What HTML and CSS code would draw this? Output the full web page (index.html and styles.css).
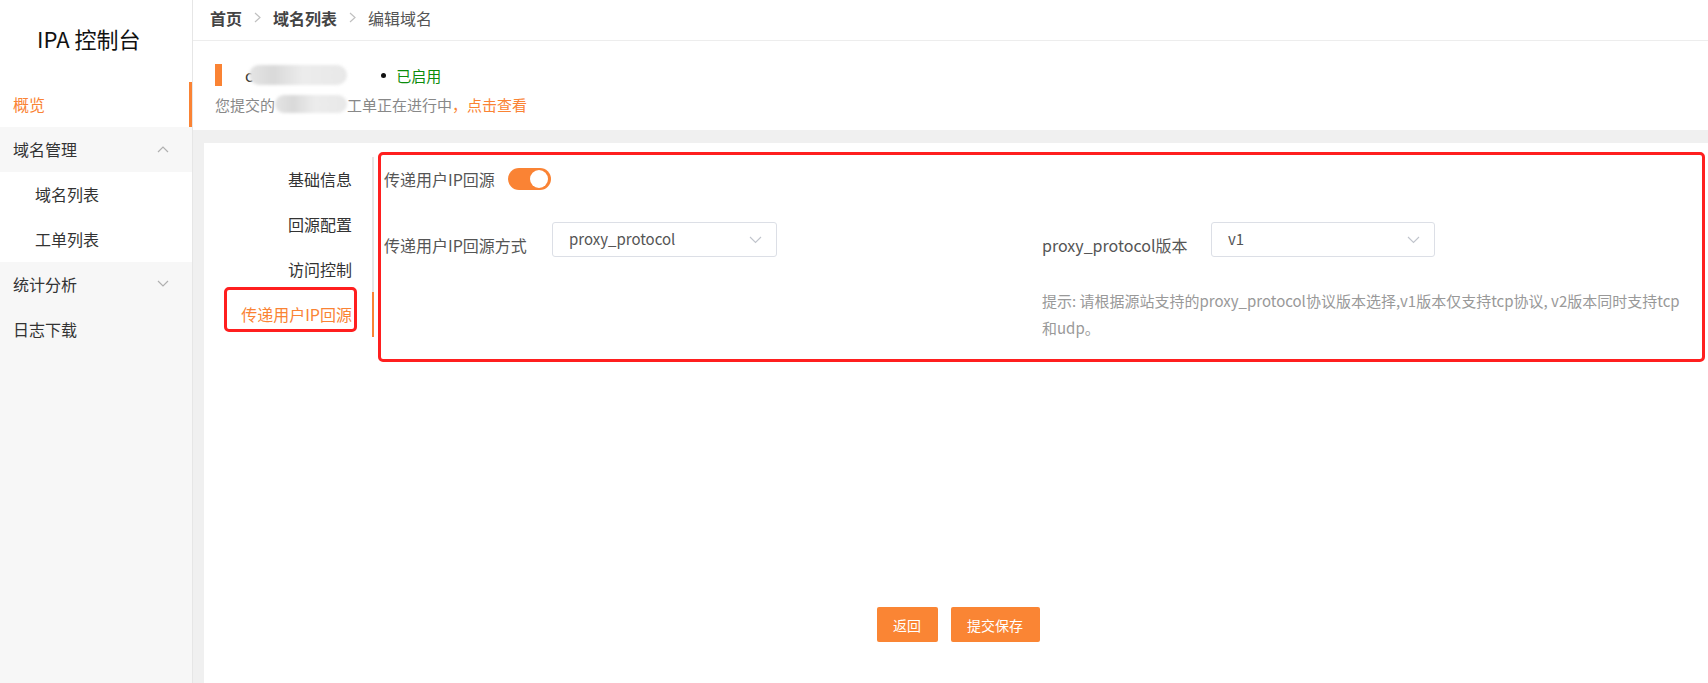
FILE: index.html
```html
<!DOCTYPE html>
<html lang="zh-CN">
<head>
<meta charset="utf-8">
<title>IPA 控制台</title>
<link rel="stylesheet" href="styles.css">
</head>
<body>
<aside class="sidebar">
  <div class="logo">IPA 控制台</div>
  <nav class="menu">
    <div class="menu-item active">概览</div>
    <div class="menu-item group">域名管理
      <svg class="chev" width="12" height="8" viewBox="0 0 12 8"><path d="M1 7 L6 2 L11 7" fill="none" stroke="#b0b0b0" stroke-width="1.2"/></svg>
    </div>
    <div class="menu-item sub">域名列表</div>
    <div class="menu-item sub">工单列表</div>
    <div class="menu-item group">统计分析
      <svg class="chev" width="12" height="8" viewBox="0 0 12 8"><path d="M1 1 L6 6 L11 1" fill="none" stroke="#b0b0b0" stroke-width="1.2"/></svg>
    </div>
    <div class="menu-item group">日志下载</div>
  </nav>
</aside>
<main class="main">
  <header class="breadcrumb">
    <span class="crumb strong">首页</span>
    <svg class="sep" width="7" height="11" viewBox="0 0 7 11"><path d="M1 1 L6 5.5 L1 10" fill="none" stroke="#c0c0c0" stroke-width="1.2"/></svg>
    <span class="crumb strong">域名列表</span>
    <svg class="sep" width="7" height="11" viewBox="0 0 7 11"><path d="M1 1 L6 5.5 L1 10" fill="none" stroke="#c0c0c0" stroke-width="1.2"/></svg>
    <span class="crumb">编辑域名</span>
  </header>
  <section class="info">
    <div class="info-row">
      <span class="mark"></span>
      <span class="domain">c</span><span class="blur-blob"></span>
      <span class="dot"></span>
      <span class="status">已启用</span>
    </div>
    <div class="info-row second">
      <span>您提交的</span><span class="blur-blob small"></span><span>工单正在进行中</span><span class="link">，点击查看</span>
    </div>
  </section>
  <section class="card">
    <div class="card-body">
      <nav class="tabs">
        <div class="tab">基础信息</div>
        <div class="tab">回源配置</div>
        <div class="tab">访问控制</div>
        <div class="tab active">传递用户IP回源<span class="mark-box"></span></div>
      </nav>
      <div class="panel">
        <div class="switch-row">
          <span class="label-text">传递用户IP回源</span>
          <span class="switch"><span class="knob"></span></span>
        </div>
        <div class="grid">
          <div class="field">
            <span class="label">传递用户IP回源方式</span>
            <div class="select wide">proxy_protocol
              <svg class="arrow" width="13" height="8" viewBox="0 0 13 8"><path d="M1 1 L6.5 6.5 L12 1" fill="none" stroke="#c0c4cc" stroke-width="1.1"/></svg>
            </div>
          </div>
          <div class="col2">
            <div class="field">
              <span class="label">proxy_protocol版本</span>
              <div class="select">v1
                <svg class="arrow" width="13" height="8" viewBox="0 0 13 8"><path d="M1 1 L6.5 6.5 L12 1" fill="none" stroke="#c0c4cc" stroke-width="1.1"/></svg>
              </div>
            </div>
            <p class="hint">提示: 请根据源站支持的proxy_protocol协议版本选择,v1版本仅支持tcp协议, v2版本同时支持tcp<br>和udp。</p>
          </div>
        </div>
      </div>
    </div>
    <div class="actions">
      <button class="btn back">返回</button>
      <button class="btn save">提交保存</button>
    </div>
  </section>
</main>
</body>
</html>
```
FILE: styles.css
```css
* { box-sizing: border-box; }
html, body { margin: 0; padding: 0; }
body {
  display: flex;
  height: 683px;
  overflow: hidden;
  font-family: "Microsoft YaHei", "Noto Sans CJK SC", "Noto Sans", sans-serif;
  color: #333;
  background: #f0f0f0;
}

/* sidebar */
.sidebar {
  width: 193px;
  flex: none;
  background: #f7f7f7;
  border-right: 1px solid #e6e6e6;
}
.logo {
  height: 82px;
  background: #fff;
  font-size: 22px;
  line-height: 28px;
  padding-top: 24px;
  padding-left: 37px;
  color: #111;
}
.menu-item {
  position: relative;
  height: 45px;
  line-height: 45px;
  padding-left: 13px;
  font-size: 16px;
  color: #333;
}
.menu-item.active {
  background: #fff;
  color: #fa8334;
  box-shadow: inset -3px 0 0 #fa8334;
}
.menu-item.group { background: #f7f7f7; }
.menu-item.sub {
  background: #fff;
  padding-left: 35px;
}
.chev {
  position: absolute;
  left: 157px;
  top: 18px;
}

/* main */
.main {
  flex: 1;
  display: flex;
  flex-direction: column;
  min-width: 0;
}
.breadcrumb {
  height: 41px;
  background: #fff;
  border-bottom: 1px solid #ededed;
  padding-left: 17px;
  display: flex;
  align-items: center;
  padding-bottom: 5px;
  font-size: 16px;
  color: #555;
}
.crumb.strong { font-weight: bold; color: #444; }
.sep { margin: 0 12px; }

.info {
  height: 89px;
  background: #fff;
  padding-left: 22px;
  padding-top: 23px;
}
.info-row {
  display: flex;
  align-items: center;
  height: 22px;
  font-size: 15px;
}
.mark {
  width: 7px;
  height: 22px;
  background: #fa8334;
}
.domain {
  margin-left: 23px;
  color: #333;
  font-size: 16px;
}
.blur-blob {
  display: inline-block;
  width: 98px;
  height: 20px;
  margin-left: -4px;
  border-radius: 10px;
  background: linear-gradient(90deg, #e4e4e4, #d9d9d9 25%, #ececec 55%, #e8e8e8);
  filter: blur(1.5px);
}
.dot {
  width: 5px;
  height: 5px;
  border-radius: 50%;
  background: #111;
  margin-left: 34px;
}
.status {
  margin-left: 10px;
  color: #0b8c0b;
}
.info-row.second {
  margin-top: 7px;
  color: #888;
}
.blur-blob.small {
  width: 72px;
  margin-left: 0;
  height: 18px;
}
.link { color: #fa8334; }

/* card */
.card {
  flex: 1;
  margin: 13px 0 0 11px;
  background: #fff;
  display: flex;
  flex-direction: column;
}
.card-body {
  display: flex;
  align-items: flex-start;
  padding-top: 9px;
}
.tabs {
  width: 170px;
  flex: none;
  margin-top: 5px;
  border-right: 2px solid #e6e6e6;
}
.tab {
  position: relative;
  height: 45px;
  line-height: 45px;
  text-align: right;
  padding-right: 20px;
  margin-right: -2px;
  border-right: 2px solid transparent;
  font-size: 16px;
  color: #333;
}
.tab.active {
  color: #fa8334;
  border-right-color: #fa8334;
}
.mark-box {
  position: absolute;
  left: 20px;
  top: -5px;
  width: 133px;
  height: 45px;
  border: 3px solid #ff1f1f;
  border-radius: 5px;
}
.panel {
  flex: 1;
  margin-left: 4px;
  margin-right: 3px;
  border: 3px solid #ff1f1f;
  border-radius: 5px;
  padding: 12px 0 18px 3px;
}
.switch-row {
  display: flex;
  align-items: center;
  height: 24px;
  font-size: 16px;
  color: #555;
}
.switch {
  position: relative;
  width: 43px;
  height: 22px;
  border-radius: 11px;
  background: #fa8334;
  margin-left: 13px;
}
.knob {
  position: absolute;
  right: 3px;
  top: 2px;
  width: 18px;
  height: 18px;
  border-radius: 50%;
  background: #fff;
}
.grid {
  display: grid;
  grid-template-columns: 658px 1fr;
  margin-top: 31px;
}
.field {
  display: flex;
  align-items: flex-start;
}
.label {
  width: 168px;
  flex: none;
  font-size: 16px;
  line-height: 22px;
  margin-top: 12px;
  color: #555;
}
.col2 .label { width: 169px; }
.select {
  position: relative;
  width: 224px;
  height: 35px;
  border: 1px solid #dcdfe6;
  border-radius: 3px;
  padding-left: 16px;
  line-height: 32px;
  font-size: 15px;
  color: #555;
}
.select.wide { width: 225px; }
.arrow {
  position: absolute;
  right: 14px;
  top: 13px;
}
.hint {
  margin: 30px 0 0;
  font-size: 15px;
  line-height: 27px;
  color: #999;
  white-space: nowrap;
}

.actions {
  margin-top: auto;
  display: flex;
  justify-content: center;
  gap: 13px;
  padding-bottom: 41px;
  padding-left: 4px;
}
.btn {
  height: 35px;
  border: none;
  border-radius: 2px;
  background: #fa8534;
  color: #fff;
  font-family: inherit;
  font-size: 14px;
  padding: 0;
}
.btn.back { width: 61px; }
.btn.save { width: 89px; }
```
